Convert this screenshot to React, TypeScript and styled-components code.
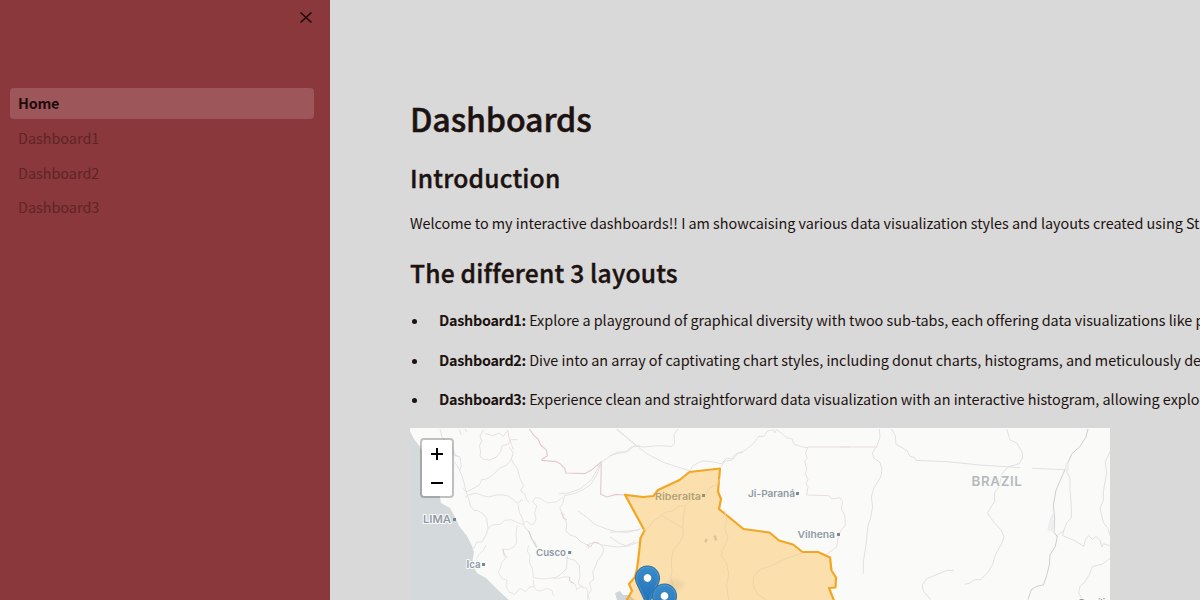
import React from "react";
import styled, { createGlobalStyle } from "styled-components";

const GlobalStyle = createGlobalStyle`
  * { box-sizing: border-box; }
  body {
    margin: 0;
    overflow: hidden;
    background: #d9d9d9;
    color: #1c1210;
    font-family: "Noto Sans CJK SC", "Noto Sans", sans-serif;
  }
`;

const Page = styled.div`
  display: flex;
  height: 600px;
  width: 1200px;
  overflow: hidden;
`;

const Sidebar = styled.aside`
  flex: 0 0 330px;
  background: #8a383b;
`;

const SidebarHeader = styled.div`
  display: flex;
  justify-content: flex-end;
  height: 88px;
  padding: 8px 14px;
`;

const CloseButton = styled.button`
  display: block;
  width: 20px;
  height: 20px;
  padding: 0;
  border: 0;
  background: none;
  color: #1c0b0b;
`;

const Nav = styled.nav`
  display: flex;
  flex-direction: column;
  gap: 3.4px;
  padding: 0 16px 0 10px;
`;

const NavItem = styled.a<{ $active?: boolean }>`
  display: flex;
  align-items: center;
  height: 31px;
  padding: 0 8px ${(p) => (p.$active ? "0.8px" : "0")};
  border-radius: 4px;
  font-size: 14.4px;
  line-height: ${(p) => (p.$active ? "30.2px" : "31px")};
  letter-spacing: ${(p) => (p.$active ? "-0.25px" : "0")};
  font-weight: ${(p) => (p.$active ? 700 : 400)};
  color: ${(p) => (p.$active ? "#1f0c0c" : "#5e2426")};
  background: ${(p) => (p.$active ? "#9d565a" : "transparent")};
`;

const Main = styled.main`
  flex: 1;
  min-width: 0;
  padding: 96px 0 0 80px;
  white-space: nowrap;
  overflow: hidden;
`;

const Title = styled.h1`
  margin: 0;
  font-size: 32.2px;
  line-height: 44px;
  font-weight: 500;
  letter-spacing: -0.15px;
  -webkit-text-stroke: 0.5px currentColor;
`;

const Heading = styled.h2`
  margin: 20px 0 0;
  font-size: 24.6px;
  line-height: 34px;
  font-weight: 500;
  letter-spacing: 0.2px;
  -webkit-text-stroke: 0.4px currentColor;
`;

const Paragraph = styled.p`
  margin: 17px 0 0;
  font-size: 14.4px;
  line-height: 24px;
  letter-spacing: -0.025px;
`;

const List = styled.ul`
  display: flex;
  flex-direction: column;
  gap: 15.5px;
  margin: 19px 0 17px;
  padding: 0;
  list-style: none;
`;

const Item = styled.li`
  display: flex;
  align-items: center;
  height: 24px;
  font-size: 14.4px;
  line-height: 24px;
  letter-spacing: -0.025px;
  white-space: pre;

  &::before {
    content: "";
    flex: none;
    width: 5px;
    height: 5px;
    margin: 3px 22px 0 2px;
    border-radius: 50%;
    background: currentColor;
  }
`;

const Name = styled.b`
  font-weight: 700;
  letter-spacing: -0.3px;
`;

const MapFrame = styled.div`
  position: relative;
  width: 700px;
  height: 172px;
  overflow: hidden;
  background: #fafaf9;
`;

const ZoomControl = styled.div`
  position: absolute;
  top: 10px;
  left: 10px;
  width: 34px;
  border: 2px solid rgba(0, 0, 0, 0.23);
  border-radius: 4px;
  background: #fff;
  background-clip: padding-box;
`;

const ZoomButton = styled.button`
  display: flex;
  align-items: center;
  justify-content: center;
  width: 30px;
  height: 28px;
  padding: 0;
  border: 0;
  background: none;

  & + & { padding-top: 2px; }
`;

const Label = styled.text`
  font-family: Inter, "Open Sans", sans-serif;
  fill: #8f9aa6;
  stroke: #fafaf9;
  stroke-width: 2px;
  paint-order: stroke;
  font-weight: 600;
`;

const cities = [
  { name: "LIMA", x: 13, y: 95, w: 28, size: 10.5, dot: 44.5 },
  { name: "Ica", x: 56.5, y: 140, w: 14, size: 9.8, dot: 73.5 },
  { name: "Cusco", x: 126, y: 128, w: 30, size: 9.4, dot: 159.7 },
  { name: "Ji-Paraná", x: 338, y: 69, w: 47, size: 9.4, dot: 387.5 },
  { name: "Vilhena", x: 387.5, y: 110, w: 37.5, size: 9.4, dot: 428.5 },
];

const Pin = ({ x, y }: { x: number; y: number }) => (
  <g transform={`translate(${x} ${y})`}>
    <path
      d="M12.5 .5C5.5 .5 .5 6 .5 12.6c0 3 1 5.300 2.300 7.900L12.500 41l9.700-20.500c1.300-2.600 2.300-4.900 2.300-7.900C24.500 6 19.500 .5 12.500 .5Z"
      fill="url(#pin)"
      stroke="#2e6c97"
      strokeWidth="1"
    />
    <path d="M12.500 1.700C6.200 1.700 1.700 6.700 1.700 12.600c0 2.700.9 5 2.100 7.300L12.500 38l8.700-18.100c1.200-2.300 2.100-4.600 2.100-7.300C23.300 6.700 18.800 1.700 12.500 1.700Z" fill="none" stroke="#5ba2d6" strokeWidth=".9" opacity=".6" />
    <circle cx="12.500" cy="12.500" r="4.300" fill="#fff" stroke="#2a72a8" strokeWidth=".8" />
  </g>
);

const MapDrawing = () => (
  <svg width="700" height="172" viewBox="0 0 700 172" fill="none" strokeLinejoin="round">
    <defs>
      <linearGradient id="pin" x1="0" y1="0" x2="0" y2="1">
        <stop offset="0" stopColor="#3b8ccb" />
        <stop offset="1" stopColor="#1c6fb5" />
      </linearGradient>
      <filter id="soft"><feGaussianBlur stdDeviation="2" /></filter>
    </defs>
    <path fill="#d4dadc" d="M0 3 4 11 11 20 18 41 30 69 31 75 40 80 46 91 49 98 57 108 62 118 64 124 62 136 67 145 76 150 88 162 99 172H0Z" />

    <g transform="translate(-10 -3) scale(.333333)" stroke="#e2dfdf" strokeWidth="2.700">
      <path d="M120 12 126 36 150 64 158 88 180 96 184 124 178 138M120 48 138 72 148 94M164 92 175 94M196 12 200 22M178 14 184 30M150 58 168 92" />
      <path stroke="#ead9dc" d="M250 14 240 34 246 48 238 62 242 78 240 94 250 102 268 106 290 96 302 80 306 62 324 58 332 44 352 44M254 26 280 32 298 24 310 34 324 16 326 34 334 58 340 74" />
      <path d="M328 66 340 84 334 102 342 118 352 130 360 160 370 182 362 198 374 206 378 220 386 232M334 102 328 112 316 122 298 130 278 150 256 164 246 162 238 180 214 194 198 200 188 190M164 112 176 130 186 152 192 174 198 200 206 222 212 244 222 256 232 256 248 266 260 280 264 310 258 330 246 350 230 352 220 372M196 218 206 210 228 204 248 212 266 216 288 210 310 210 326 214 342 226 354 236 364 224 370 226M354 238 358 262 368 282 370 296 376 308 390 324 394 342 404 350 412 368" />
      <path stroke="#e8e1e3" d="M264 310 276 300 300 298 314 286 334 284 350 292 366 298 382 288 392 300 402 296 408 282 404 264 410 242 398 230 406 218 420 220 442 234 470 230 490 216M258 360 250 376 238 388 230 400 232 412M352 300 348 326 350 352 342 366 326 374 308 372 312 392 318 398 306 412 300 432 294 442 308 462 322 466 318 482 326 500 344 508 360 490 376 500 390 486 402 484M386 362 382 378 390 394 388 412 398 432 400 458 432 462 462 458 476 460 490 456 508 456 510 470 526 478 530 494 544 484 560 490 568 524M400 464 402 486 410 496 422 498 440 490 456 496 460 512" />
      <path stroke="#e5c9d0" strokeWidth="3.500" d="M388 12 402 32 414 42 422 60 440 76 442 92 426 102 426 106 470 110 480 116 494 130 498 144 554 146 576 134 604 110 602 208 620 216 648 208 672 210" />
      <path d="M478 206 506 204 540 192 560 176 574 164 588 140 604 112M492 212 522 206 550 194 572 178 590 150 606 110M606 110 630 94 650 82 678 80 694 66 720 62M650 14 678 36 708 60M534 258 562 278 584 298 620 312 650 320 682 322 720 312M494 214 488 236 480 248 484 262 492 268 490 280 498 286 500 300 498 318 510 330 528 336 542 350 562 360 566 372M560 360 584 352 606 360 650 366 680 364 720 350M604 360 612 374 604 392 592 408 586 426 578 440 582 462 568 474 574 496 562 510 564 524M496 398 524 406 538 422 540 454 534 476 552 490M502 390 500 430 484 446 462 462" />
      <path d="M386 318 394 338 400 350 410 368" stroke="#cdcdcd" strokeWidth="3" />
      <path stroke="#e5c9d0" d="M484 262 490 278 500 284 M562 360 572 366 580 352 598 354M308 372 314 390 322 398M510 456 508 466 522 476" />
    </g>
    <path fill="#cfd5d9" d="M205 165 210 163 213 167 219 167 225 172H207Z" />

    <g transform="translate(200 -3) scale(.333333)" stroke="#e2dfdf" strokeWidth="2.700">
      <path d="M22 12 64 50 110 86 160 112 240 138M204 12 192 28 194 54 186 64 150 62 100 66 74 62 52 80 20 86 0 92M240 138 248 122 276 108 304 110 334 116 350 100 370 102 382 86 402 78 430 56 446 34 462 34 472 18 490 14 494 24 500 14 516 26 530 38 546 42 552 58 578 66 594 68M334 124 344 108 364 106 374 88 398 82M0 336 30 356 48 362 76 350M0 322 80 316 100 310" />
      <path stroke="#e9dadd" d="M594 66H720M594 66 586 84 592 100 584 108 590 132 586 146 594 164 588 176 594 186 590 210 656 212 666 222 690 218 698 230 694 252 704 270 706 300 690 322 684 342 680 366 650 388" />
    </g>
    <g transform="translate(430 -3) scale(.333333)" stroke="#dfdedf" strokeWidth="2.700">
      <path stroke="#e9dadd" d="M0 66H112" />
      <path d="M118 12 120 36 112 60 98 82 100 98 120 112 126 134 122 156 102 188 94 216 98 244 92 278 84 302 78 360 70 410 70 446" />
      <path d="M154 12 166 32 168 58 186 68 202 78 210 94 224 98 228 106 320 110 420 120 540 128M576 130 676 134M500 12 510 44 530 54 546 80 548 98 538 116 508 124 494 136 484 150 478 184 464 202 464 230 442 264 462 292 484 316 492 336 484 358 466 390 458 418 444 442 422 464 404 464 390 474 374 478M342 436 322 436 262 460 246 480 250 498 272 524" />
      <path stroke="#cecece" strokeWidth="3" d="M744 12 738 36 720 64 696 86 684 112 674 136 660 168 648 196 640 240 644 280 642 322 652 334 646 364 630 390 628 420 620 452 610 480 590 484 574 494 564 524" />
      <path d="M678 136 690 160 690 190 694 250 694 278 680 294 672 316 658 326 648 336M672 314 668 332 702 346 732 364 736 344 746 332 758 344 768 334 780 346 786 366 790 356 810 362M810 80 796 110 800 144 790 200 790 226 780 250 790 292 804 310 810 332M810 400 786 418 758 424 748 448 734 472 720 484 716 504 728 524" />
      <path fill="#eeeeee" stroke="none" d="M678 114 686 116 686 138 674 136ZM630 280 640 260 642 322 622 316Z" />
    </g>

    <path
      d="M215 66.800 233 69 243.500 68 248 62 269.500 52 279.500 44 310 40.500 308 63.500 311 71 309 81 333.500 101 359.500 104.500 369 112.500 383 116.500 392.500 124 408 124 420 129.500 421.500 142.500 426 149.500 425.500 159.500 419 160 425 175H215L222 163 219 156 225 149 227 141 229 125 230.500 110 234.500 102.500Z"
      fill="#ffa500" fillOpacity=".3" stroke="#f3a623" strokeWidth="2.200"
    />
    <g transform="translate(200 -3) scale(.333333)" stroke="#e8d2a8" strokeWidth="2.500">
      <path d="M330 162 322 178 300 188 288 208 264 220 246 224 224 242 206 244 186 258 164 262 150 276 130 288 120 304 100 316M226 242 220 280 218 306 220 330 210 352 190 374 184 408 186 440 182 458 190 486 194 524M150 268 182 288 220 310M344 256 350 286 344 312 354 336 346 360 336 378 334 390 350 416 356 444 350 482 356 524M578 384 530 400 484 422 448 434 430 458 430 484 444 510 470 524" />
      <path d="M290 342 286 352M314 332 318 346" stroke="#dcc596" strokeWidth="8" />
    </g>
    <Label x="245" y="71.500" textLength="46" lengthAdjust="spacingAndGlyphs" fontSize="9.400" style={{ stroke: "none", fill: "#b3a079" }}>Riberalta</Label>
    <rect x="292" y="66" width="3" height="3" fill="#9f8e6b" />

    {cities.map((c) => (
      <g key={c.name}>
        <Label x={c.x} y={c.y} fontSize={c.size} textLength={c.w} lengthAdjust="spacingAndGlyphs">{c.name}</Label>
        <rect x={c.dot - 1.5} y={c.y - 5} width="3" height="3" fill="#7c8791" />
      </g>
    ))}
    <Label x="561.500" y="58" fontSize="12.800" textLength="51" lengthAdjust="spacingAndGlyphs" letterSpacing=".6" style={{ fill: "#b5babe" }}>BRAZIL</Label>
    <Label x="669" y="178" fontSize="9.400" textLength="31" lengthAdjust="spacingAndGlyphs">Brasília</Label>

    <path d="M238 172 262 150 276 156 254 174Z" fill="#8a7a58" opacity=".12" filter="url(#soft)" />
    <Pin x={225} y={137.5} />
    <Pin x={242} y={155.5} />
  </svg>
);

export default function App() {
  return (
    <>
      <GlobalStyle />
      <Page>
        <Sidebar>
          <SidebarHeader>
            <CloseButton aria-label="Close">
              <svg width="20" height="20" viewBox="0 0 20 20" fill="none" stroke="currentColor" strokeWidth="1.600" style={{ display: "block" }}>
                <path d="M4.500 4.500 15.500 14.500M15.500 4.500 4.500 14.500" />
              </svg>
            </CloseButton>
          </SidebarHeader>
          <Nav>
            <NavItem $active>Home</NavItem>
            <NavItem>Dashboard1</NavItem>
            <NavItem>Dashboard2</NavItem>
            <NavItem>Dashboard3</NavItem>
          </Nav>
        </Sidebar>
        <Main>
          <Title>Dashboards</Title>
          <Heading>Introduction</Heading>
          <Paragraph>
            Welcome to my interactive dashboards!! I am showcaising various data visualization styles and layouts created using Streamlit
          </Paragraph>
          <Heading>The different 3 layouts</Heading>
          <List>
            <Item><Name>Dashboard1:</Name> Explore a playground of graphical diversity with twoo sub-tabs, each offering data visualizations like pie</Item>
            <Item><Name>Dashboard2:</Name> Dive into an array of captivating chart styles, including donut charts, histograms, and meticulously designed</Item>
            <Item><Name>Dashboard3:</Name> Experience clean and straightforward data visualization with an interactive histogram, allowing exploration</Item>
          </List>
          <MapFrame>
            <MapDrawing />
            <ZoomControl>
              <ZoomButton aria-label="Zoom in">
                <svg width="12" height="12" viewBox="0 0 12 12" stroke="#000" strokeWidth="2"><path d="M0 6H12M6 0V12" /></svg>
              </ZoomButton>
              <ZoomButton aria-label="Zoom out">
                <svg width="12" height="12" viewBox="0 0 12 12" stroke="#000" strokeWidth="2"><path d="M0 6H12" /></svg>
              </ZoomButton>
            </ZoomControl>
          </MapFrame>
        </Main>
      </Page>
    </>
  );
}
